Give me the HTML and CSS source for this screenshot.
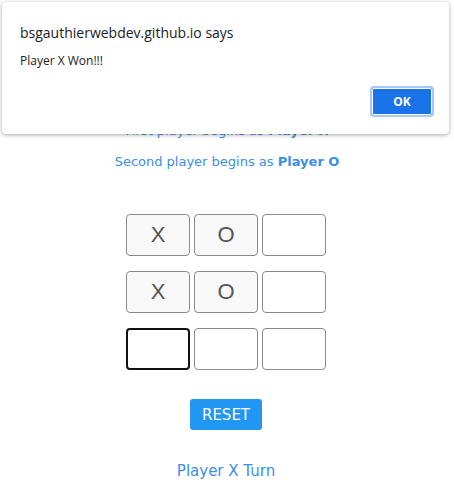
FILE: index.html
```html
<!DOCTYPE html>
<html>
<head>
<meta charset="utf-8">
<link rel="stylesheet" href="styles.css">
</head>
<body>
<main class="game">
  <p class="intro intro-first">First player begins as <b>Player X</b></p>
  <p class="intro">Second player begins as <b>Player O</b></p>
  <div class="board">
    <button class="cell filled">X</button>
    <button class="cell filled">O</button>
    <button class="cell"></button>
    <button class="cell filled">X</button>
    <button class="cell filled">O</button>
    <button class="cell"></button>
    <button class="cell focused"></button>
    <button class="cell"></button>
    <button class="cell"></button>
  </div>
  <button class="reset">RESET</button>
  <p class="turn">Player X Turn</p>
</main>
<div class="dialog">
  <div class="dialog-title">bsgauthierwebdev.github.io says</div>
  <div class="dialog-msg">Player X Won!!!</div>
  <div class="dialog-actions"><button class="ok">OK</button></div>
</div>
</body>
</html>
```
FILE: styles.css
```css
html, body {
  margin: 0;
  padding: 0;
  background: #ffffff;
}
body {
  width: 454px;
  height: 498px;
  overflow: hidden;
  font-family: "DejaVu Sans", Verdana, sans-serif;
}
.game {
  display: flex;
  flex-direction: column;
  align-items: center;
  padding-top: 123px;
  color: #3b8fe6;
}
.intro {
  margin: 0;
  font-size: 13px;
  line-height: 16px;
}
.intro-first {
  margin-bottom: 15px;
}
.intro b {
  font-weight: bold;
}
.board {
  margin-top: 44px;
  margin-right: 2px;
  display: grid;
  grid-template-columns: repeat(3, 64px);
  grid-auto-rows: 42px;
  column-gap: 4px;
  row-gap: 15px;
}
.cell {
  box-sizing: border-box;
  background: #ffffff;
  border: 1px solid #8a8a8a;
  border-radius: 4px;
  font-family: "Liberation Sans", Arial, sans-serif;
  font-size: 22px;
  color: #555555;
  padding: 0;
}
.cell.filled {
  background: #f8f8f8;
}
.cell.focused {
  border: 2px solid #111111;
}
.reset {
  margin-top: 29px;
  margin-right: 2px;
  width: 72px;
  height: 31px;
  background: #2196f3;
  color: #ffffff;
  border: none;
  border-radius: 3px;
  font-family: "DejaVu Sans", Verdana, sans-serif;
  font-size: 15px;
  padding: 0;
}
.turn {
  margin: 32px 2px 0 0;
  font-size: 15px;
  line-height: 18px;
}
.dialog {
  position: absolute;
  left: 2px;
  top: 2px;
  width: 447px;
  height: 132px;
  box-sizing: border-box;
  background: #ffffff;
  border-radius: 4px;
  box-shadow: 0 1px 4px rgba(0,0,0,0.35);
  padding: 21px 15px 0 18px;
  font-family: "Open Sans", "Noto Sans", sans-serif;
  color: #202124;
}
.dialog-title {
  font-size: 14px;
  line-height: 20px;
}
.dialog-msg {
  margin-top: 10px;
  font-size: 12px;
  line-height: 16px;
  color: #202124;
}
.dialog-actions {
  display: flex;
  justify-content: flex-end;
  margin-top: 17px;
}
.ok {
  width: 64px;
  height: 31px;
  background: #1a73e8;
  color: #ffffff;
  border: 2px solid #a8c7fa;
  border-radius: 4px;
  font-family: "Open Sans", "Noto Sans", sans-serif;
  font-weight: bold;
  font-size: 12px;
  box-shadow: inset 0 0 0 1px #ffffff;
  padding: 0;
}
```
